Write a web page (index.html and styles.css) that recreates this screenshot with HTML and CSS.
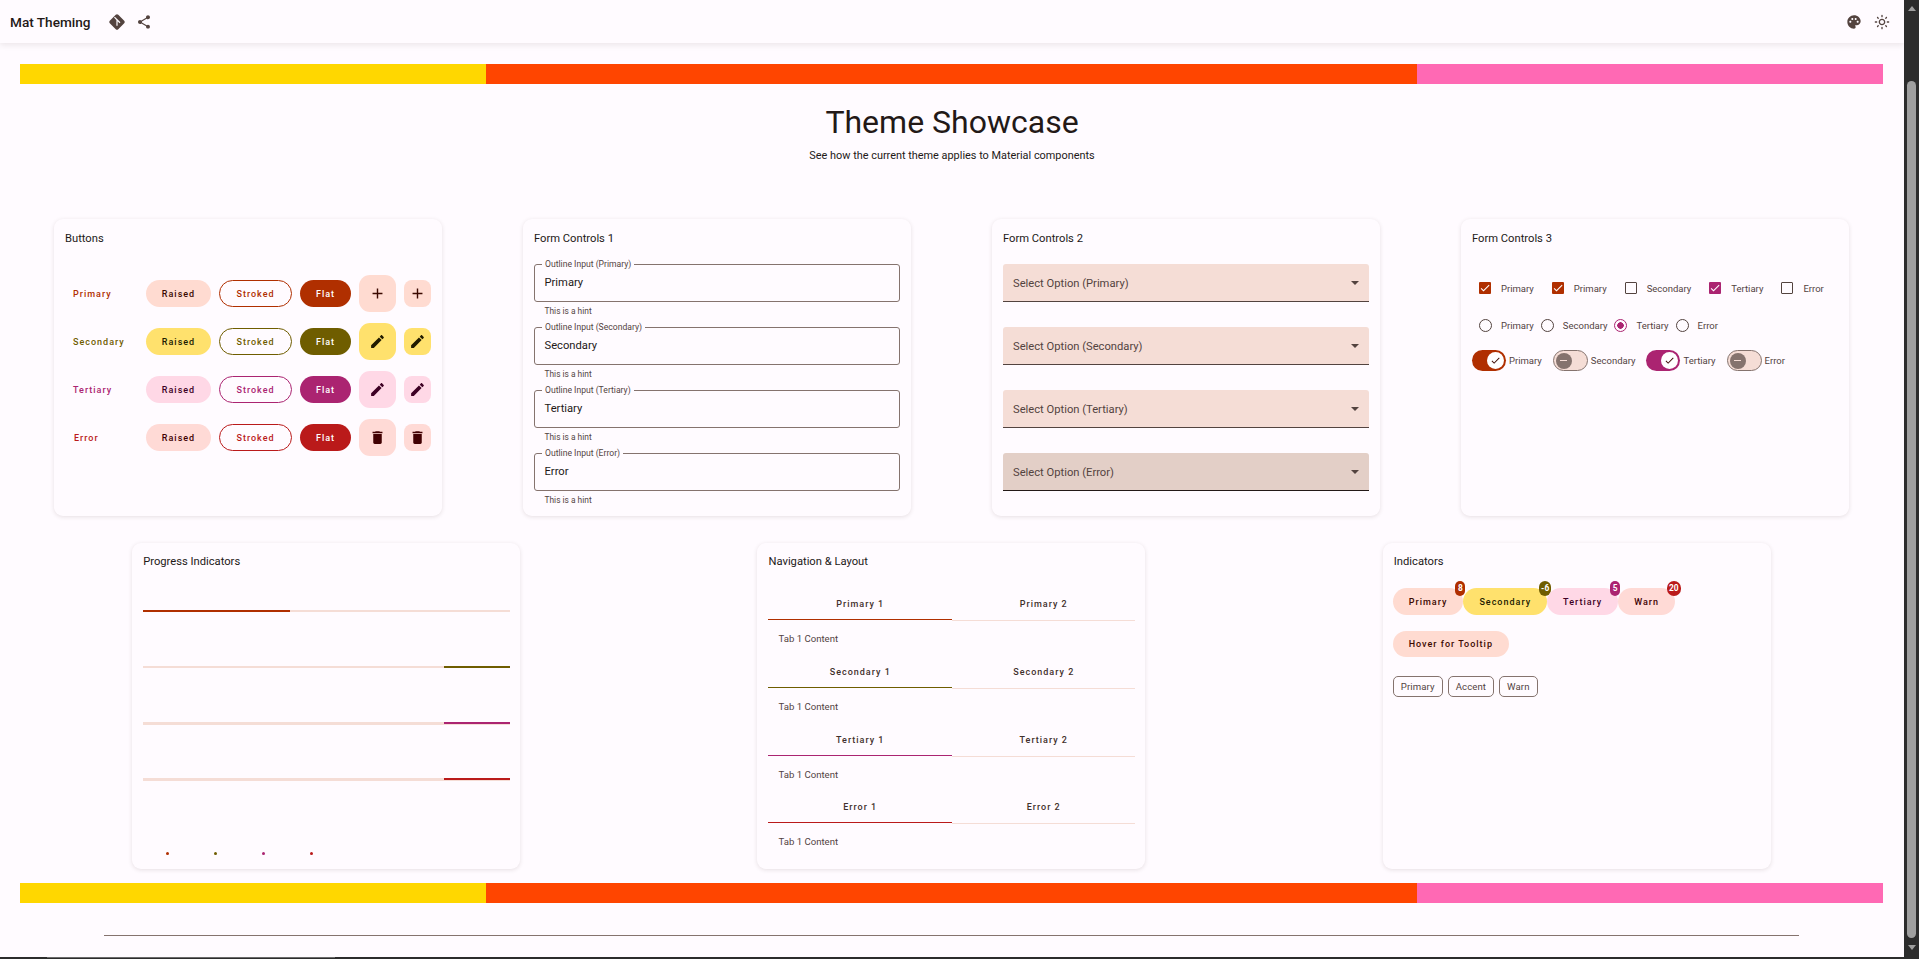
FILE: index.html
```html
<!DOCTYPE html>
<html lang="en">
<head>
    <meta charset="UTF-8">
    <meta name="viewport" content="width=device-width, initial-scale=1.0">
    <title>Mat Theming</title>
    <link rel="stylesheet" href="styles.css">
</head>
<body>
    <svg class="sprite" aria-hidden="true">
        <symbol id="i-add" viewBox="0 0 24 24"><path d="M19 13h-6v6h-2v-6H5v-2h6V5h2v6h6v2z"/></symbol>
        <symbol id="i-edit" viewBox="0 0 24 24"><path d="M3 17.25V21h3.75L17.81 9.94l-3.75-3.75L3 17.25zM20.71 7.04c.39-.39.39-1.02 0-1.41l-2.34-2.34c-.39-.39-1.02-.39-1.41 0l-1.83 1.83 3.75 3.75 1.83-1.83z"/></symbol>
        <symbol id="i-delete" viewBox="0 0 24 24"><path d="M6 19c0 1.1.9 2 2 2h8c1.1 0 2-.9 2-2V7H6v12zM19 4h-3.5l-1-1h-5l-1 1H5v2h14V4z"/></symbol>
        <symbol id="i-check" viewBox="0 0 24 24"><path d="M9 16.17L4.83 12l-1.41 1.41L9 19 21 7l-1.41-1.41z"/></symbol>
    </svg>

    <div class="window">
        <div class="page">
            <header class="toolbar">
                <span class="app-title">Mat Theming</span>
                <svg class="tool-icon git-icon" viewBox="0 0 24 24">
                    <rect x="4" y="4" width="16" height="16" rx="2.4" transform="rotate(45 12 12)"/>
                    <path class="git-lines" d="M8.6 5.6l3.4 3.4v8M12 9l4 4"/>
                </svg>
                <svg class="tool-icon share-icon" viewBox="0 0 24 24"><path d="M18 16.08c-.76 0-1.44.3-1.96.77L8.91 12.7c.05-.23.09-.46.09-.7s-.04-.47-.09-.7l7.05-4.11c.54.5 1.25.81 2.04.81 1.66 0 3-1.34 3-3s-1.34-3-3-3-3 1.34-3 3c0 .24.04.47.09.7L8.04 9.81C7.5 9.31 6.79 9 6 9c-1.66 0-3 1.34-3 3s1.34 3 3 3c.79 0 1.5-.31 2.04-.81l7.12 4.16c-.05.21-.08.43-.08.65 0 1.61 1.31 2.92 2.92 2.92 1.61 0 2.92-1.31 2.92-2.92s-1.31-2.92-2.92-2.92z"/></svg>
                <span class="toolbar-space"></span>
                <svg class="tool-icon" viewBox="0 0 24 24"><path d="M12 2C6.49 2 2 6.49 2 12s4.49 10 10 10c1.38 0 2.5-1.12 2.5-2.5 0-.61-.23-1.2-.64-1.67-.08-.1-.13-.21-.13-.33 0-.28.22-.5.5-.5H16c3.31 0 6-2.69 6-6 0-4.96-4.49-9-10-9zm5.5 11c-.83 0-1.5-.67-1.5-1.5s.67-1.5 1.5-1.5 1.5.67 1.5 1.5-.67 1.5-1.5 1.5zm-3-4c-.83 0-1.5-.67-1.5-1.5S13.67 6 14.5 6s1.5.67 1.5 1.5S15.33 9 14.5 9zM5 11.5c0-.83.67-1.5 1.5-1.5s1.5.67 1.5 1.5S7.33 13 6.5 13 5 12.33 5 11.5zm6-4c0 .83-.67 1.5-1.5 1.5S8 8.33 8 7.5 8.67 6 9.5 6s1.5.67 1.5 1.5z"/></svg>
                <svg class="tool-icon sun-icon" viewBox="0 0 24 24"><path d="M12 9c1.65 0 3 1.35 3 3s-1.35 3-3 3-3-1.35-3-3 1.35-3 3-3m0-2c-2.76 0-5 2.24-5 5s2.24 5 5 5 5-2.24 5-5-2.24-5-5-5zM2 13h2c.55 0 1-.45 1-1s-.45-1-1-1H2c-.55 0-1 .45-1 1s.45 1 1 1zm18 0h2c.55 0 1-.45 1-1s-.45-1-1-1h-2c-.55 0-1 .45-1 1s.45 1 1 1zM11 2v2c0 .55.45 1 1 1s1-.45 1-1V2c0-.55-.45-1-1-1s-1 .45-1 1zm0 18v2c0 .55.45 1 1 1s1-.45 1-1v-2c0-.55-.45-1-1-1s-1 .45-1 1zM5.99 4.58c-.39-.39-1.03-.39-1.41 0-.39.39-.39 1.03 0 1.41l1.06 1.06c.39.39 1.03.39 1.41 0s.39-1.03 0-1.41L5.99 4.58zm12.37 12.37c-.39-.39-1.03-.39-1.41 0-.39.39-.39 1.03 0 1.41l1.06 1.06c.39.39 1.03.39 1.41 0 .39-.39.39-1.03 0-1.41l-1.06-1.06zm1.06-10.96c.39-.39.39-1.03 0-1.41-.39-.39-1.03-.39-1.41 0l-1.06 1.06c-.39.39-.39 1.03 0 1.41s1.03.39 1.41 0l1.06-1.06zM7.05 18.36c.39-.39.39-1.03 0-1.41-.39-.39-1.03-.39-1.41 0l-1.06 1.06c-.39.39-.39 1.03 0 1.41s1.03.39 1.41 0l1.06-1.06z"/></svg>
            </header>

            <div class="strip"><span class="strip-yellow"></span><span class="strip-orange"></span><span class="strip-pink"></span></div>

            <h1 class="page-title">Theme Showcase</h1>
            <p class="page-sub">See how the current theme applies to Material components</p>

            <div class="cards">
                <section class="card card-top">
                    <h2 class="card-title">Buttons</h2>
                    <div class="button-rows">
                        <div class="button-row primary">
                            <span class="row-label">Primary</span>
                            <span class="btn btn-raised">Raised</span>
                            <span class="btn btn-stroked">Stroked</span>
                            <span class="btn btn-flat">Flat</span>
                            <span class="fab"><svg><use href="#i-add"/></svg></span>
                            <span class="fab fab-mini"><svg><use href="#i-add"/></svg></span>
                        </div>
                        <div class="button-row secondary">
                            <span class="row-label">Secondary</span>
                            <span class="btn btn-raised">Raised</span>
                            <span class="btn btn-stroked">Stroked</span>
                            <span class="btn btn-flat">Flat</span>
                            <span class="fab"><svg><use href="#i-edit"/></svg></span>
                            <span class="fab fab-mini"><svg><use href="#i-edit"/></svg></span>
                        </div>
                        <div class="button-row tertiary">
                            <span class="row-label">Tertiary</span>
                            <span class="btn btn-raised">Raised</span>
                            <span class="btn btn-stroked">Stroked</span>
                            <span class="btn btn-flat">Flat</span>
                            <span class="fab"><svg><use href="#i-edit"/></svg></span>
                            <span class="fab fab-mini"><svg><use href="#i-edit"/></svg></span>
                        </div>
                        <div class="button-row error">
                            <span class="row-label row-label-error">Error</span>
                            <span class="btn btn-raised">Raised</span>
                            <span class="btn btn-stroked">Stroked</span>
                            <span class="btn btn-flat">Flat</span>
                            <span class="fab"><svg><use href="#i-delete"/></svg></span>
                            <span class="fab fab-mini"><svg><use href="#i-delete"/></svg></span>
                        </div>
                    </div>
                </section>

                <section class="card card-top">
                    <h2 class="card-title">Form Controls 1</h2>
                    <div class="field-list">
                        <div class="field-group">
                            <div class="outline-field"><span class="float-label">Outline Input (Primary)</span>Primary</div>
                            <div class="hint">This is a hint</div>
                        </div>
                        <div class="field-group">
                            <div class="outline-field"><span class="float-label">Outline Input (Secondary)</span>Secondary</div>
                            <div class="hint">This is a hint</div>
                        </div>
                        <div class="field-group">
                            <div class="outline-field"><span class="float-label">Outline Input (Tertiary)</span>Tertiary</div>
                            <div class="hint">This is a hint</div>
                        </div>
                        <div class="field-group">
                            <div class="outline-field"><span class="float-label">Outline Input (Error)</span>Error</div>
                            <div class="hint">This is a hint</div>
                        </div>
                    </div>
                </section>

                <section class="card card-top">
                    <h2 class="card-title">Form Controls 2</h2>
                    <div class="field-list">
                        <div class="select-field">Select Option (Primary)<span class="select-arrow"></span></div>
                        <div class="select-field">Select Option (Secondary)<span class="select-arrow"></span></div>
                        <div class="select-field">Select Option (Tertiary)<span class="select-arrow"></span></div>
                        <div class="select-field select-error">Select Option (Error)<span class="select-arrow"></span></div>
                    </div>
                </section>

                <section class="card card-top">
                    <h2 class="card-title">Form Controls 3</h2>
                    <div class="check-row">
                        <label class="check-item"><span class="checkbox primary"><svg><use href="#i-check"/></svg></span>Primary</label>
                        <label class="check-item"><span class="checkbox primary"><svg><use href="#i-check"/></svg></span>Primary</label>
                        <label class="check-item"><span class="checkbox checkbox-off"></span>Secondary</label>
                        <label class="check-item"><span class="checkbox tertiary"><svg><use href="#i-check"/></svg></span>Tertiary</label>
                        <label class="check-item"><span class="checkbox checkbox-off"></span>Error</label>
                    </div>
                    <div class="radio-row">
                        <label class="radio-item"><span class="radio"></span>Primary</label>
                        <label class="radio-item"><span class="radio"></span>Secondary</label>
                        <label class="radio-item"><span class="radio radio-on"></span>Tertiary</label>
                        <label class="radio-item"><span class="radio"></span>Error</label>
                    </div>
                    <div class="toggle-row">
                        <label class="toggle-item"><span class="toggle toggle-on primary"><span class="thumb"><svg><use href="#i-check"/></svg></span></span>Primary</label>
                        <label class="toggle-item"><span class="toggle"><span class="thumb"></span></span>Secondary</label>
                        <label class="toggle-item"><span class="toggle toggle-on tertiary"><span class="thumb"><svg><use href="#i-check"/></svg></span></span>Tertiary</label>
                        <label class="toggle-item"><span class="toggle"><span class="thumb"></span></span>Error</label>
                    </div>
                </section>

                <section class="card card-bottom">
                    <h2 class="card-title">Progress Indicators</h2>
                    <div class="progress-list">
                        <div class="progress-cell"><div class="progress primary"><span class="progress-fill fill-start"></span></div></div>
                        <div class="progress-cell"><div class="progress secondary"><span class="progress-fill fill-end"></span></div></div>
                        <div class="progress-cell"><div class="progress progress-thick tertiary"><span class="progress-fill fill-end"></span></div></div>
                        <div class="progress-cell"><div class="progress progress-thick error"><span class="progress-fill fill-end"></span></div></div>
                    </div>
                    <div class="spinner-row">
                        <span class="spinner primary"></span>
                        <span class="spinner secondary"></span>
                        <span class="spinner tertiary"></span>
                        <span class="spinner error"></span>
                    </div>
                </section>

                <section class="card card-bottom">
                    <h2 class="card-title">Navigation &amp; Layout</h2>
                    <div class="tab-list">
                        <div class="tab-group primary">
                            <div class="tab-header"><span class="tab tab-active">Primary 1</span><span class="tab">Primary 2</span></div>
                            <div class="tab-body">Tab 1 Content</div>
                        </div>
                        <div class="tab-group secondary">
                            <div class="tab-header"><span class="tab tab-active">Secondary 1</span><span class="tab">Secondary 2</span></div>
                            <div class="tab-body">Tab 1 Content</div>
                        </div>
                        <div class="tab-group tertiary">
                            <div class="tab-header"><span class="tab tab-active">Tertiary 1</span><span class="tab">Tertiary 2</span></div>
                            <div class="tab-body">Tab 1 Content</div>
                        </div>
                        <div class="tab-group error">
                            <div class="tab-header"><span class="tab tab-active">Error 1</span><span class="tab">Error 2</span></div>
                            <div class="tab-body">Tab 1 Content</div>
                        </div>
                    </div>
                </section>

                <section class="card card-bottom">
                    <h2 class="card-title">Indicators</h2>
                    <div class="badge-row">
                        <span class="btn btn-raised badge-btn primary">Primary<span class="badge">8</span></span>
                        <span class="btn btn-raised badge-btn secondary">Secondary<span class="badge">-6</span></span>
                        <span class="btn btn-raised badge-btn tertiary">Tertiary<span class="badge">5</span></span>
                        <span class="btn btn-raised badge-btn error">Warn<span class="badge">20</span></span>
                    </div>
                    <div class="tooltip-row"><span class="btn btn-raised tooltip-btn primary">Hover for Tooltip</span></div>
                    <div class="chip-row">
                        <span class="chip">Primary</span>
                        <span class="chip">Accent</span>
                        <span class="chip">Warn</span>
                    </div>
                </section>
            </div>

            <div class="strip strip-bottom"><span class="strip-yellow"></span><span class="strip-orange"></span><span class="strip-pink"></span></div>

            <hr class="footer-line">
            <div class="hscroll"><span class="hscroll-thumb"></span></div>
        </div>

        <div class="vscroll">
            <span class="scroll-up"></span>
            <span class="scroll-thumb"></span>
            <span class="scroll-down"></span>
        </div>
    </div>
</body>
</html>
```

FILE: styles.css
```css
* {
    box-sizing: border-box;
}
body {
    margin: 0;
    height: 959px;
    overflow: hidden;
    background-color: #fffbff;
    color: #231917;
    font-family: Roboto, "Liberation Sans", sans-serif;
}
.sprite {
    display: none;
}
.primary {
    --main: #b02f00;
    --box: #ffdbd1;
    --on-box: #3b0900;
}
.secondary {
    --main: #6f5d00;
    --box: #ffe16d;
    --on-box: #221b00;
}
.tertiary {
    --main: #ab2471;
    --box: #ffd8e6;
    --on-box: #3e0024;
}
.error {
    --main: #ba1a1a;
    --box: #ffdad6;
    --on-box: #410002;
}
.window {
    display: grid;
    grid-template-columns: 1fr 15px;
    height: 959px;
}
.page {
    display: flex;
    flex-direction: column;
    min-width: 0;
    height: 959px;
    overflow: hidden;
}

/* toolbar */
.toolbar {
    display: flex;
    align-items: center;
    flex: none;
    height: 43px;
    padding: 0 14px 0 10px;
    background-color: #fffbff;
    box-shadow: 0 2px 6px rgba(60, 40, 40, 0.1);
}
.app-title {
    width: 98px;
    font-size: 13.6px;
    font-weight: 500;
}
.tool-icon {
    width: 16px;
    height: 16px;
    fill: #53433f;
}
.git-icon {
    width: 18px;
    height: 18px;
    margin-right: 10px;
}
.git-lines {
    fill: none;
    stroke: #fffbff;
    stroke-width: 1.6;
}
.sun-icon {
    margin-left: 12px;
}
.toolbar-space {
    flex: 1;
}

/* colour strip */
.strip {
    display: flex;
    flex: none;
    height: 20px;
    margin: 21px 21px 0 20px;
}
.strip-bottom {
    margin-top: 14px;
}
.strip-yellow {
    width: 25%;
    background-color: #ffd700;
}
.strip-orange {
    width: 50%;
    background-color: #ff4500;
}
.strip-pink {
    width: 25%;
    background-color: #ff69b4;
}

.page-title {
    margin: 18px 0 0;
    font-size: 32px;
    font-weight: 400;
    line-height: 40px;
    text-align: center;
}
.page-sub {
    margin: 6px 0 0;
    font-size: 10.9px;
    line-height: 16px;
    text-align: center;
}

/* cards */
.cards {
    display: flex;
    flex-wrap: wrap;
    justify-content: space-around;
    row-gap: 27px;
    margin-top: 55px;
    padding: 0 14.5px 0 13.5px;
}
.card {
    width: 388px;
    padding: 11px;
    background-color: #fffbff;
    border-radius: 9px;
    box-shadow: 0 1px 4px rgba(60, 40, 40, 0.13);
}
.card-top {
    height: 297px;
    padding-top: 12px;
}
.card-bottom {
    height: 326px;
}
.card-title {
    margin: 0;
    font-size: 11.2px;
    font-weight: 400;
    line-height: 16px;
}

/* buttons */
.button-rows {
    display: flex;
    flex-direction: column;
    gap: 11px;
    margin-top: 28px;
}
.button-row {
    display: flex;
    align-items: center;
    height: 37px;
    gap: 8px;
    padding-left: 8px;
}
.row-label {
    width: 65px;
    color: var(--main);
    font-size: 9px;
    font-weight: 500;
    letter-spacing: 1px;
}
.row-label-error {
    padding-left: 1px;
}
.btn {
    display: flex;
    align-items: center;
    justify-content: center;
    height: 27px;
    border-radius: 14px;
    font-size: 9px;
    font-weight: 500;
    letter-spacing: 1px;
    white-space: nowrap;
}
.btn-raised {
    width: 65px;
    background-color: var(--box);
    color: var(--on-box);
}
.btn-stroked {
    width: 73px;
    border: 1px solid var(--main);
    color: var(--main);
}
.btn-flat {
    width: 51px;
    background-color: var(--main);
    color: #ffffff;
}
.fab {
    display: flex;
    align-items: center;
    justify-content: center;
    width: 37px;
    height: 37px;
    border-radius: 11px;
    background-color: var(--box);
    fill: var(--on-box);
}
.fab svg {
    width: 17px;
    height: 17px;
}
.fab-mini {
    width: 27px;
    height: 27px;
    border-radius: 8px;
}

/* form fields */
.field-list {
    display: flex;
    flex-direction: column;
    gap: 25px;
    margin-top: 17px;
}
.field-group {
    height: 38px;
}
.outline-field {
    position: relative;
    height: 38px;
    padding: 10px 9.5px 0;
    border: 1px solid #85736e;
    border-radius: 3px;
    font-size: 11.2px;
    line-height: 16px;
}
.float-label {
    position: absolute;
    left: 7px;
    top: -5px;
    padding: 0 3px;
    background-color: #fffbff;
    color: #53433f;
    font-size: 8.6px;
    line-height: 9px;
    white-space: nowrap;
}
.hint {
    margin-top: 4px;
    padding-left: 10.5px;
    color: #53433f;
    font-size: 8.4px;
    line-height: 10px;
}
.select-field {
    position: relative;
    height: 38px;
    padding: 12px 10px 0;
    background-color: #f5ddd6;
    border-bottom: 1px solid #53433f;
    border-radius: 3px 3px 0 0;
    color: #53433f;
    font-size: 11.2px;
    line-height: 16px;
}
.select-error {
    background-color: #e3cfc7;
    border-bottom-color: #231917;
}
.select-arrow {
    position: absolute;
    right: 10px;
    top: 17px;
    border-left: 4px solid transparent;
    border-right: 4px solid transparent;
    border-top: 4px solid #53433f;
}

/* checks, radios and toggles */
.check-row,
.radio-row,
.toggle-row {
    display: flex;
    align-items: center;
    color: #53433f;
    font-size: 9.5px;
}
.check-row {
    gap: 18px;
    height: 12px;
    margin-top: 35px;
    padding-left: 7px;
}
.check-item,
.radio-item,
.toggle-item {
    display: flex;
    align-items: center;
}
.checkbox {
    display: flex;
    width: 12px;
    height: 12px;
    margin-right: 10px;
    border-radius: 1px;
    background-color: var(--main);
    fill: #ffffff;
}
.checkbox svg {
    width: 12px;
    height: 12px;
}
.checkbox-off {
    background: none;
    border: 1px solid #53433f;
}
.radio-row {
    gap: 7px;
    height: 13px;
    margin-top: 25px;
    padding-left: 7px;
}
.radio {
    width: 13px;
    height: 13px;
    margin-right: 9px;
    border: 1px solid #53433f;
    border-radius: 50%;
}
.radio-on {
    border-color: #ab2471;
    background: radial-gradient(circle, #ab2471 0 3px, transparent 3.5px);
}
.toggle-row {
    gap: 11px;
    height: 21px;
    margin-top: 18px;
}
.toggle {
    display: flex;
    align-items: center;
    width: 35px;
    height: 21px;
    margin-right: 3px;
    padding-left: 2px;
    border: 1px solid #85736e;
    border-radius: 11px;
    background-color: #f5ddd6;
}
.thumb {
    display: flex;
    align-items: center;
    justify-content: center;
    width: 16px;
    height: 16px;
    border-radius: 50%;
    background-color: #85736e;
}
.thumb:empty::after {
    content: "";
    width: 7px;
    height: 1px;
    background-color: #f5ddd6;
}
.toggle-on {
    justify-content: flex-end;
    width: 34px;
    padding: 0 2px 0 0;
    border: none;
    background-color: var(--main);
}
.toggle-on .thumb {
    width: 17px;
    height: 17px;
    background-color: #ffffff;
    fill: #3b0900;
}
.thumb svg {
    width: 11px;
    height: 11px;
}

/* progress */
.progress-list {
    margin: 40px -1px 0 0;
}
.progress-cell {
    height: 56px;
}
.progress {
    display: flex;
    height: 2px;
    background-color: #f5ddd6;
}
.progress-thick {
    height: 3px;
}
.progress-fill {
    display: block;
    height: 2px;
    background-color: var(--main);
}
.fill-start {
    width: 40%;
}
.fill-end {
    width: 18%;
    margin-left: auto;
}
.spinner-row {
    display: flex;
    gap: 45px;
    margin-top: 18px;
    padding-left: 23px;
}
.spinner {
    width: 3px;
    height: 3px;
    border-radius: 50%;
    background-color: var(--main);
}

/* tabs */
.tab-list {
    margin-right: -1px;
    padding-top: 10px;
}
.tab-group {
    height: 67.8px;
}
.tab-header {
    display: flex;
    padding-top: 16px;
}
.tab {
    flex: 1;
    padding-bottom: 8px;
    border-bottom: 1px solid #f5ddd6;
    color: #3f302c;
    font-size: 9px;
    font-weight: 500;
    line-height: 16px;
    letter-spacing: 1px;
    text-align: center;
}
.tab-active {
    margin-bottom: 1px;
    padding-bottom: 7px;
    border-bottom-color: var(--main);
}
.tab-body {
    padding: 10px 10px 0;
    color: #53433f;
    font-size: 9.6px;
    line-height: 16px;
}

/* indicators */
.badge-row {
    display: flex;
    margin: 18px 0 0 -1px;
}
.badge-btn {
    position: relative;
    width: auto;
    padding: 0 16px;
}
.badge {
    position: absolute;
    top: -7px;
    left: calc(100% - 8px);
    min-width: 10px;
    height: 15px;
    padding: 0 2px;
    border-radius: 8px;
    background-color: var(--main);
    color: #ffffff;
    font-size: 8.4px;
    font-weight: 700;
    letter-spacing: 0;
    line-height: 15px;
    text-align: center;
}
.tooltip-row {
    display: flex;
    margin: 16px 0 0 -1px;
}
.tooltip-btn {
    width: 116px;
    height: 26px;
}
.chip-row {
    display: flex;
    gap: 5px;
    margin: 19px 0 0 -1px;
}
.chip {
    height: 21px;
    padding: 0 7px;
    border: 1px solid #85736e;
    border-radius: 5px;
    color: #53433f;
    font-size: 9.6px;
    letter-spacing: 0.1px;
    line-height: 19px;
}

.footer-line {
    flex: none;
    width: 1695px;
    height: 1px;
    margin: 32px 0 0 104px;
    border: none;
    background-color: #85736e;
}
.hscroll {
    flex: none;
    height: 2px;
    margin-top: 21px;
    background-color: #2c2c2c;
}
.hscroll-thumb {
    display: block;
    width: 288px;
    height: 1px;
    margin-left: 47px;
    background-color: #6b6b6b;
}

/* scrollbar */
.vscroll {
    display: flex;
    flex-direction: column;
    align-items: center;
    height: 959px;
    background-color: #2c2c2c;
}
.scroll-up {
    margin-top: 6px;
    border-left: 4.5px solid transparent;
    border-right: 4.5px solid transparent;
    border-bottom: 5px solid #9f9f9f;
}
.scroll-thumb {
    width: 9px;
    height: 857px;
    margin-top: 70px;
    border-radius: 5px;
    background-color: #9f9f9f;
}
.scroll-down {
    margin-top: 7px;
    border-left: 4.5px solid transparent;
    border-right: 4.5px solid transparent;
    border-top: 5px solid #9f9f9f;
}
```
